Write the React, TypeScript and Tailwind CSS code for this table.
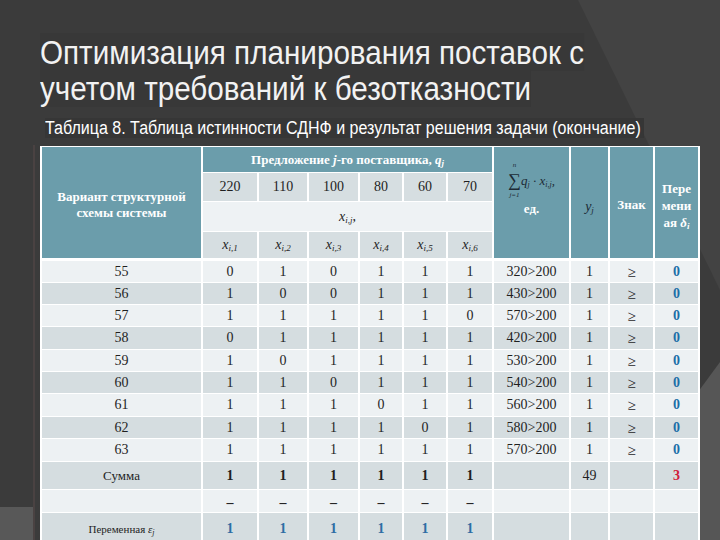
const serif = "font-['Liberation_Serif','Times_New_Roman',serif]";
const sans = "font-['Liberation_Sans','Arial',sans-serif]";

const rows: [string, number[], string][] = [
  ["55", [0, 1, 0, 1, 1, 1], "320>200"],
  ["56", [1, 0, 0, 1, 1, 1], "430>200"],
  ["57", [1, 1, 1, 1, 1, 0], "570>200"],
  ["58", [0, 1, 1, 1, 1, 1], "420>200"],
  ["59", [1, 0, 1, 1, 1, 1], "530>200"],
  ["60", [1, 1, 0, 1, 1, 1], "540>200"],
  ["61", [1, 1, 1, 0, 1, 1], "560>200"],
  ["62", [1, 1, 1, 1, 0, 1], "580>200"],
  ["63", [1, 1, 1, 1, 1, 1], "570>200"],
];

const rowH = ["h-[23px]", "h-[22px]", "h-[22px]", "h-[23px]", "h-[22px]", "h-[22px]", "h-[23px]", "h-[22px]", "h-[23px]"];

const cell = "border border-white border-x-2 p-0 text-center align-middle";
const light = "bg-[#edf1f3]";
const dark = "bg-[#d5dde0]";
const teal = "bg-[#6b9dab]";

function X({ sub }: { sub: string }) {
  return (
    <span className="italic">
      x<sub className="text-[9px]">{sub}</sub>
    </span>
  );
}

export default function App() {
  return (
    <div className="relative w-[720px] h-[540px] overflow-hidden bg-[#3b3b3b]">
      {/* slide background shapes */}
      <svg className="absolute inset-0" width="720" height="540">
        <polygon points="578,0 720,0 720,290" fill="#434343" />
        <polygon points="698,392 720,362 720,540 698,540" fill="#565656" />
        <rect x="0" y="507" width="34" height="33" fill="#585858" />
        <rect x="33" y="145" width="2" height="395" fill="#4a4242" />
      </svg>

      <div className="relative flex flex-col pl-10 pt-[34px]">
        {/* narrow title face: Arial-metric font squeezed horizontally */}
        <h1 className={`${sans} origin-left scale-x-[0.872] whitespace-nowrap text-[34px] leading-[36px] text-[#f2f2f2]`}>
          <span className="bg-[#383838]">Оптимизация планирования поставок с</span>
          <br />
          <span className="bg-[#383838]">учетом требований к безотказности</span>
        </h1>
        <p className={`${sans} mt-3 ml-[5px] self-start origin-left scale-x-[0.89] whitespace-nowrap bg-[#363636] pr-1 text-[18px] leading-[20px] text-white`}>
          Таблица 8. Таблица истинности СДНФ и результат решения задачи (окончание)
        </p>

        <table className={`mt-2 table-fixed border-collapse w-[658px] text-[14px] leading-[18px] text-[#1f1f1f] ${serif}`}>
          <colgroup>
            <col className="w-[161px]" />
            <col className="w-[56px]" />
            <col className="w-[50px]" />
            <col className="w-[51px]" />
            <col className="w-[44px]" />
            <col className="w-[44px]" />
            <col className="w-[46px]" />
            <col className="w-[77px]" />
            <col className="w-[39px]" />
            <col className="w-[45px]" />
            <col className="w-[45px]" />
          </colgroup>
          <thead>
            <tr className="h-[26px]">
              <td rowSpan={4} className={`${cell} ${teal} pt-1 text-[13px] font-bold leading-[16px] text-white`}>
                Вариант структурной
                <br />
                схемы системы
              </td>
              <td colSpan={6} className={`${cell} ${teal} text-[13px] font-bold text-white`}>
                Предложение <i>j</i>-го поставщика, <i>q<sub className="text-[9px]">j</sub></i>
              </td>
              <td rowSpan={4} className={`${cell} ${teal} align-top pt-[14px]`}>
                <div className="flex items-center justify-center text-[#1c2b36]">
                  <span className="flex flex-col items-center">
                    <span className="text-[7px] italic leading-[9px]">n</span>
                    <span className="text-[18px] leading-[21px]">∑</span>
                    <span className="text-[7px] italic leading-[9px]">j=1</span>
                  </span>
                  <span className="text-[13px] italic">
                    q<sub className="text-[8px]">j</sub> · x<sub className="text-[8px]">i,j</sub>,
                  </span>
                </div>
                <div className="text-[13px] font-bold text-white">ед.</div>
              </td>
              <td rowSpan={4} className={`${cell} ${teal} pt-2 text-[14px] italic text-[#1c2b36]`}>
                y<sub className="text-[9px]">j</sub>
              </td>
              <td rowSpan={4} className={`${cell} ${teal} pt-1 text-[13px] font-bold text-white`}>
                Знак
              </td>
              <td rowSpan={4} className={`${cell} ${teal} pt-[6px] text-[13px] font-bold leading-[17px] text-white`}>
                Пере
                <br />
                мени
                <br />
                ая <i>δ<sub className="text-[9px]">i</sub></i>
              </td>
            </tr>
            <tr className="h-[29px]">
              {["220", "110", "100", "80", "60", "70"].map((v) => (
                <td key={v} className={`${cell} bg-[#d6dee1]`}>
                  {v}
                </td>
              ))}
            </tr>
            <tr className="h-[30px]">
              <td colSpan={6} className={`${cell} bg-[#eef2f4]`}>
                <X sub="i,j" />,
              </td>
            </tr>
            <tr className="h-[28px] border-b-[3px] border-white">
              {["i,1", "i,2", "i,3", "i,4", "i,5", "i,6"].map((s) => (
                <td key={s} className={`${cell} bg-[#d6dee1]`}>
                  <X sub={s} />
                </td>
              ))}
            </tr>
          </thead>
          <tbody>
            {rows.map(([n, xs, sum], i) => (
              <tr key={n} className={`${rowH[i]} ${i % 2 === 0 ? light : dark}`}>
                <td className={cell}>{n}</td>
                {xs.map((x, j) => (
                  <td key={j} className={cell}>
                    {x}
                  </td>
                ))}
                <td className={cell}>{sum}</td>
                <td className={cell}>1</td>
                <td className={`${cell} text-[15px]`}>≥</td>
                <td className={`${cell} font-bold text-[#1b6fa8]`}>0</td>
              </tr>
            ))}
            <tr className={`h-[28px] ${dark}`}>
              <td className={`${cell} text-[13px]`}>Сумма</td>
              {[0, 1, 2, 3, 4, 5].map((j) => (
                <td key={j} className={`${cell} font-bold`}>
                  1
                </td>
              ))}
              <td className={cell}></td>
              <td className={cell}>49</td>
              <td className={cell}></td>
              <td className={`${cell} font-bold text-[#d0203a]`}>3</td>
            </tr>
            <tr className={`h-[23px] ${light}`}>
              <td className={cell}></td>
              {[0, 1, 2, 3, 4, 5].map((j) => (
                <td key={j} className={`${cell} pt-1 font-bold`}>
                  –
                </td>
              ))}
              <td className={cell}></td>
              <td className={cell}></td>
              <td className={cell}></td>
              <td className={cell}></td>
            </tr>
            <tr className={`h-[32px] ${dark}`}>
              <td className={`${cell} text-[11px]`}>
                Переменная <i>ε<sub className="text-[8px]">j</sub></i>
              </td>
              {[0, 1, 2, 3, 4, 5].map((j) => (
                <td key={j} className={`${cell} font-bold text-[#2e6da4]`}>
                  1
                </td>
              ))}
              <td className={cell}></td>
              <td className={cell}></td>
              <td className={cell}></td>
              <td className={cell}></td>
            </tr>
          </tbody>
        </table>
      </div>
    </div>
  );
}
